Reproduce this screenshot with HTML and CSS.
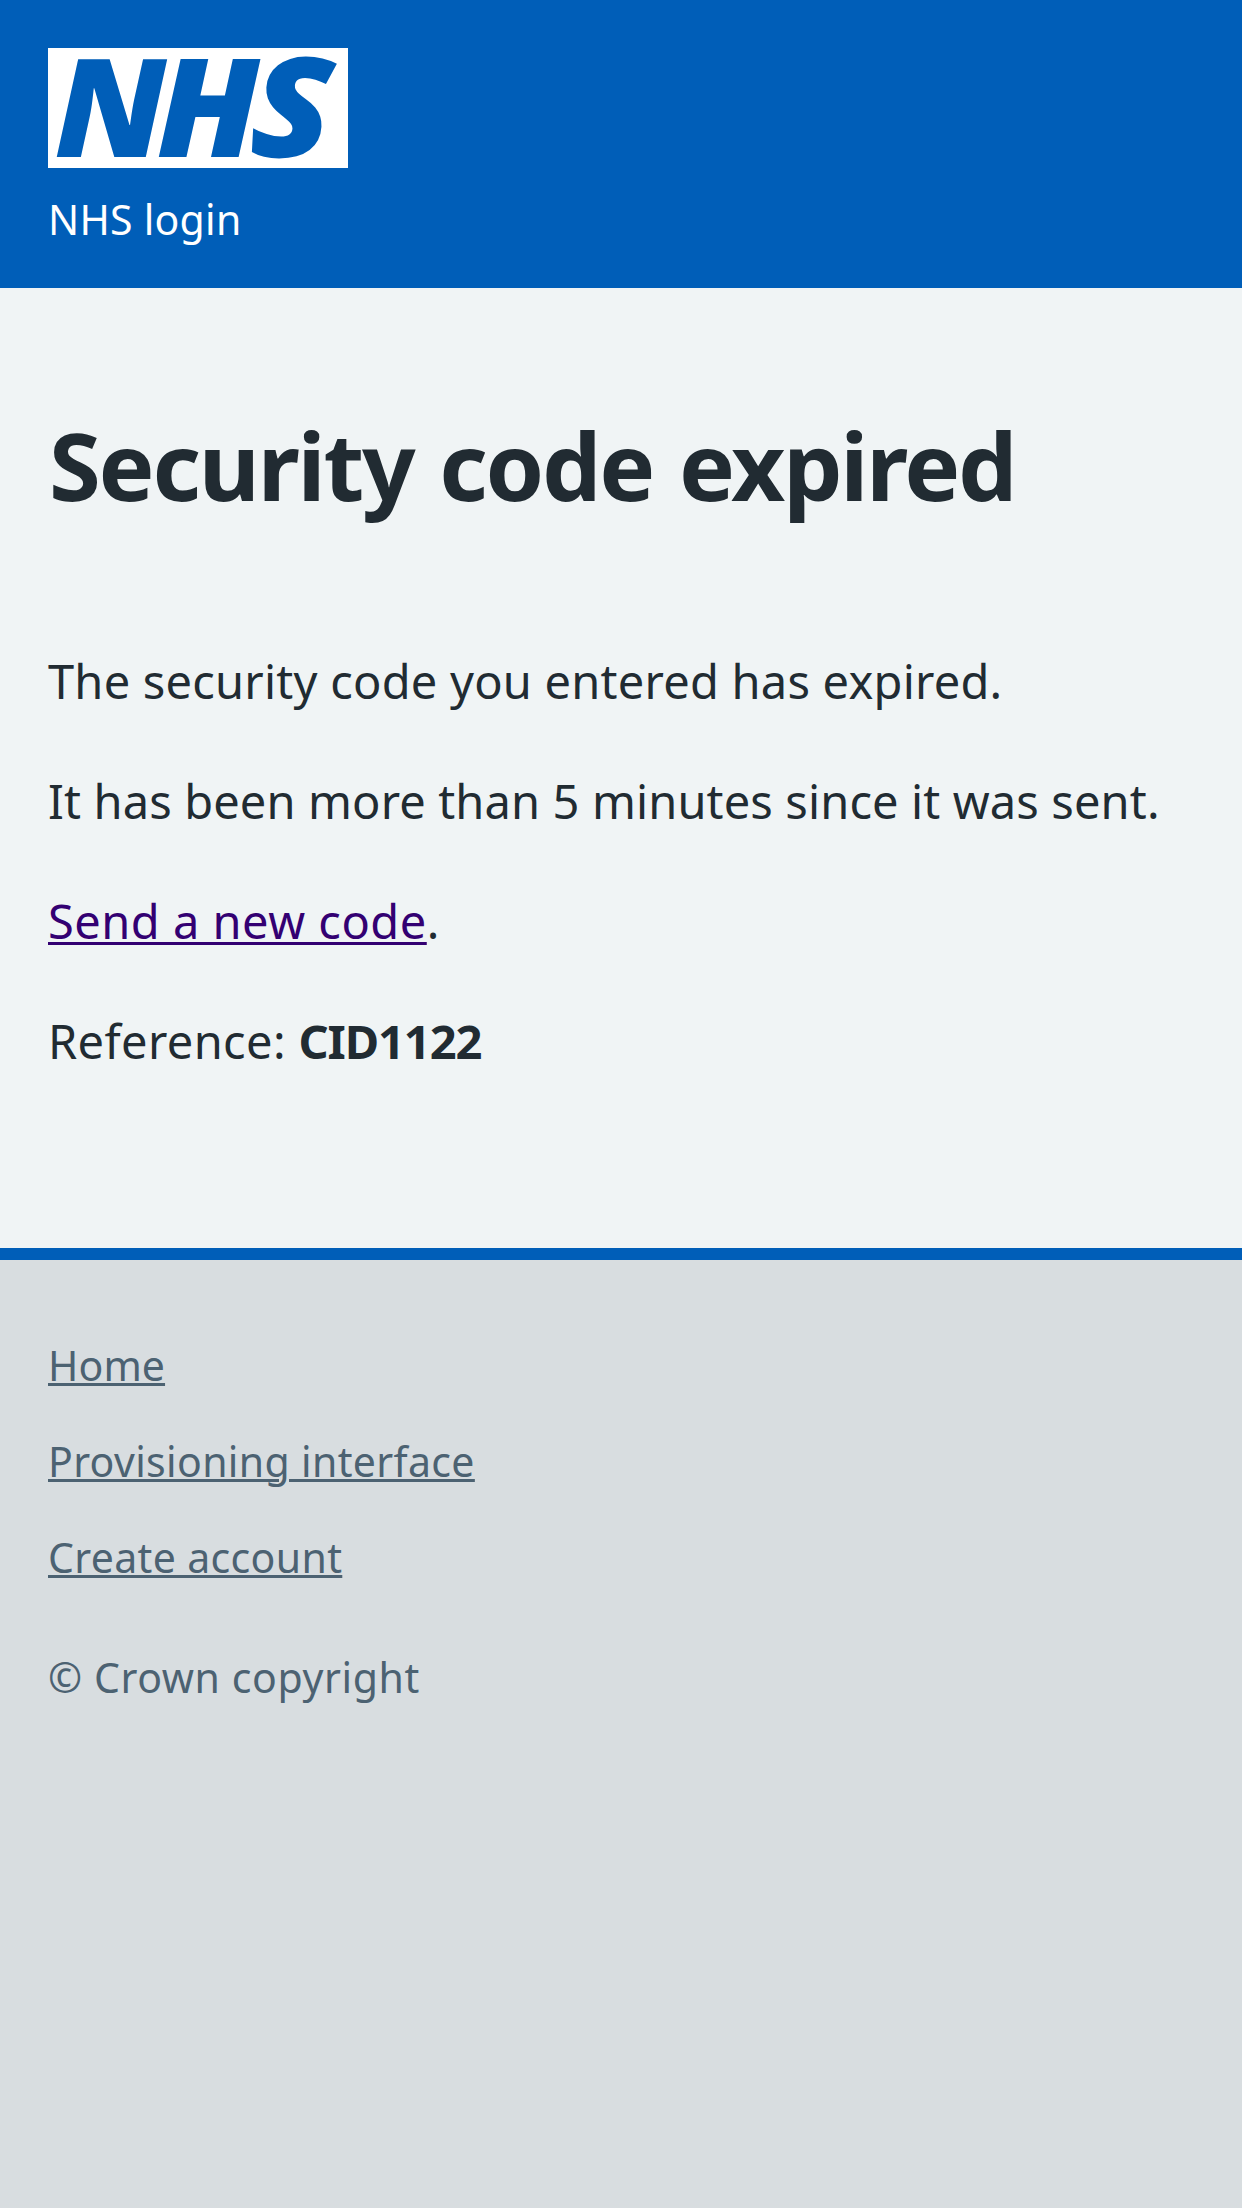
FILE: index.html
```html
<!DOCTYPE html>
<html lang="en">
<head>
<meta charset="utf-8">
<title>Security code expired - NHS login</title>
<link rel="stylesheet" href="styles.css">
</head>
<body>
<header class="header">
  <svg class="logo" viewBox="0 0 300 120" role="img" aria-label="NHS">
    <rect class="logo-panel" width="300" height="120"/>
    <g class="logo-letters">
      <text transform="translate(6.6 108.7) scale(1.042 1)">N</text>
      <text transform="translate(108.6 108.7) scale(1.063 1)">H</text>
      <text transform="translate(200.4 108.9) skewX(-3) scale(1.1 1.02)">S</text>
    </g>
  </svg>
  <span class="service-name">NHS login</span>
</header>
<main class="content">
  <h1 class="title">Security code expired</h1>
  <p class="text text-first">The security code you entered has expired.</p>
  <p class="text text-second">It has been more than 5 minutes since it was sent.</p>
  <p class="text"><a class="link" href="#">Send a new code</a>.</p>
  <p class="text text-reference">Reference: <strong class="code">CID1122</strong></p>
</main>
<footer class="footer">
  <ul class="footer-list">
    <li><a class="footer-link footer-link-home" href="#">Home</a></li>
    <li><a class="footer-link" href="#">Provisioning interface</a></li>
    <li><a class="footer-link" href="#">Create account</a></li>
  </ul>
  <p class="copyright">© Crown copyright</p>
</footer>
</body>
</html>
```
FILE: styles.css
```css
* {
  box-sizing: border-box;
}

body {
  display: flex;
  flex-direction: column;
  min-height: 2208px;
  margin: 0;
  background: #d8dde0;
  color: #212b32;
  font-family: "Noto Sans", "Open Sans", sans-serif;
}

.header {
  display: flex;
  flex-direction: column;
  height: 288px;
  padding: 48px 48px 0;
  background: #005eb8;
}

.logo {
  display: block;
  width: 300px;
  height: 120px;
  overflow: visible;
}

.logo-panel {
  fill: #fff;
}

.logo-letters {
  fill: #005eb8;
  font: italic 900 136px "Noto Sans", "Open Sans", sans-serif;
}

.service-name {
  margin-top: 21px;
  color: #fff;
  font-size: 41px;
  line-height: 60px;
  letter-spacing: 0.25px;
}

.content {
  height: 960px;
  padding: 123px 48px 0;
  background: #f0f4f5;
}

.title {
  margin: 0 0 126px;
  padding-left: 1px;
  font-size: 94px;
  font-weight: 700;
  line-height: 108px;
  letter-spacing: -2.2px;
  word-spacing: 3.5px;
}

.text {
  margin: 0 0 48px;
  font-size: 47px;
  line-height: 72px;
}

.text-first {
  letter-spacing: 0.23px;
}

.text-second {
  letter-spacing: 0.13px;
}

.text-reference {
  letter-spacing: 0.38px;
}

.code {
  font-weight: 700;
  letter-spacing: -1.1px;
}

.link,
.footer-link {
  text-decoration: underline;
  text-decoration-thickness: 3px;
  text-underline-offset: 3px;
}

.link {
  color: #330072;
  letter-spacing: 0.5px;
}

.footer {
  flex: 1;
  padding: 75px 48px 0;
  border-top: 12px solid #005eb8;
  background: #d8dde0;
  color: #4c6272;
  font-size: 41px;
  line-height: 60px;
}

.footer-list {
  display: flex;
  flex-direction: column;
  gap: 36px;
  margin: 0 0 60px;
  padding: 0;
  list-style: none;
}

.footer-link {
  color: #4c6272;
  letter-spacing: 0.35px;
  text-underline-offset: 2px;
}

.footer-link-home {
  letter-spacing: 0.1px;
}

.copyright {
  margin: 0;
  letter-spacing: 0.6px;
}
```
